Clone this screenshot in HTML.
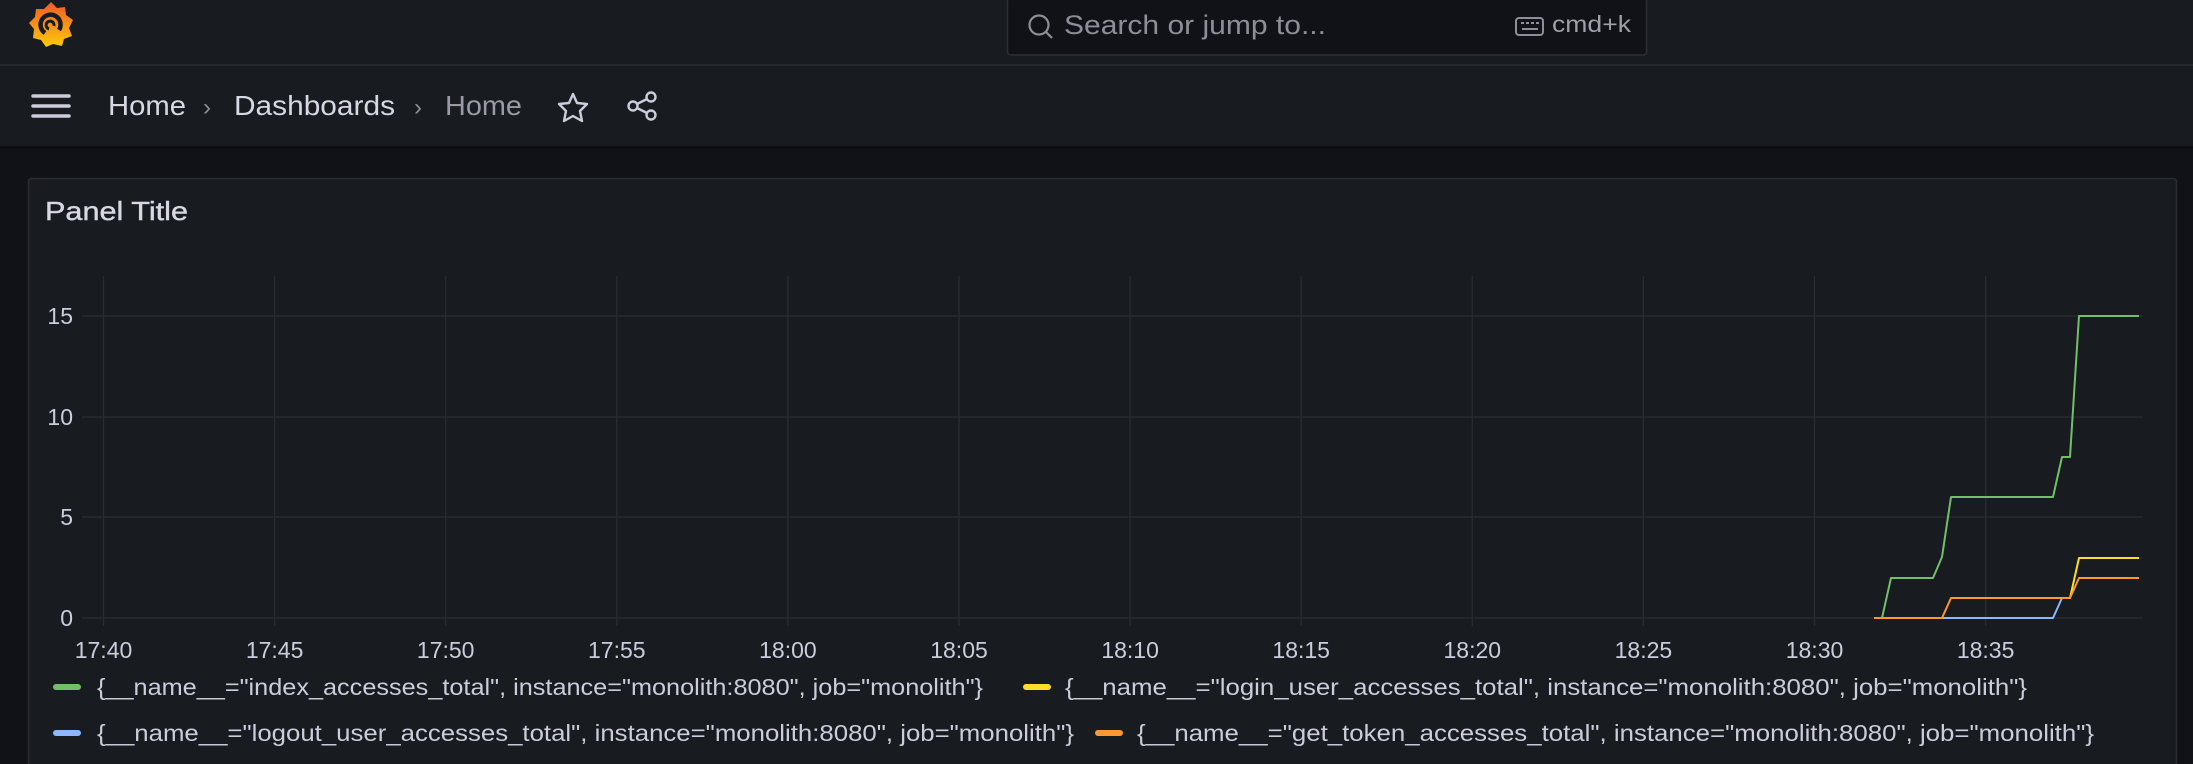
<!DOCTYPE html>
<html><head><meta charset="utf-8"><style>
html,body{margin:0;padding:0;background:#111217;width:2193px;height:764px;overflow:hidden}
svg{display:block}
text{font-family:"Liberation Sans",sans-serif}
</style></head><body>
<svg width="2193" height="764" viewBox="0 0 2193 764" xmlns="http://www.w3.org/2000/svg">
<defs>
<linearGradient id="lg" x1="0" y1="0" x2="0" y2="1"><stop offset="0" stop-color="#f05a28"/><stop offset="1" stop-color="#fbca0a"/></linearGradient>
</defs>
<rect x="0" y="0" width="2193" height="764" fill="#111217"/>
<rect x="0" y="0" width="2193" height="64" fill="#181b1f"/>
<rect x="0" y="64" width="2193" height="2" fill="#25272c"/>
<g transform="translate(51,25)">
<path d="M0,-23 L6,-17 L14,-18 L15,-10 L22,-5 L18,3 L21,11 L13,14 L11,21 L2,19 L-5,22 L-10,15 L-18,13 L-17,4 L-22,-2 L-16,-8 L-15,-16 L-7,-16 Z" fill="url(#lg)"/>
<path d="M-6,8 A10,10 0 1 1 8,5" fill="none" stroke="#181b1f" stroke-width="4.5"/>
<path d="M-2,4 a4,4 0 1 1 5,-3" fill="none" stroke="#181b1f" stroke-width="3"/>
</g>
<rect x="1007.5" y="-2" width="639" height="57" rx="3" fill="#111217" stroke="#2c2e33" stroke-width="1.5"/>
<circle cx="1039" cy="25" r="9.5" fill="none" stroke="#8e8e98" stroke-width="2.2"/>
<line x1="1046" y1="32" x2="1052" y2="38" stroke="#8e8e98" stroke-width="2.2"/>
<text x="1064" y="34" font-size="27" fill="#8e8e98" textLength="262" lengthAdjust="spacingAndGlyphs">Search or jump to...</text>
<rect x="1516" y="18" width="27" height="17" rx="3" fill="none" stroke="#8e8e98" stroke-width="2"/>
<g fill="#8e8e98"><rect x="1521" y="22" width="3" height="2"/><rect x="1526" y="22" width="3" height="2"/><rect x="1531" y="22" width="3" height="2"/><rect x="1536" y="22" width="3" height="2"/><rect x="1522" y="28" width="16" height="2"/></g>
<text x="1552" y="32" font-size="23" fill="#9fa0a8" textLength="79" lengthAdjust="spacingAndGlyphs">cmd+k</text>
<rect x="0" y="66" width="2193" height="80" fill="#181b1f"/>
<rect x="0" y="146" width="2193" height="3" fill="#0d0e11"/>
<g stroke="#ccccdc" stroke-width="3.5" stroke-linecap="round">
<line x1="33" y1="96" x2="69" y2="96"/><line x1="33" y1="106" x2="69" y2="106"/><line x1="33" y1="116" x2="69" y2="116"/>
</g>
<text x="108" y="115" font-size="28" fill="#d8d8e4" textLength="78" lengthAdjust="spacingAndGlyphs">Home</text>
<text x="203" y="115" font-size="24" fill="#8e8e98">›</text>
<text x="234" y="115" font-size="28" fill="#d8d8e4" textLength="161" lengthAdjust="spacingAndGlyphs">Dashboards</text>
<text x="414" y="115" font-size="24" fill="#8e8e98">›</text>
<text x="445" y="115" font-size="28" fill="#9a9aa4" textLength="77" lengthAdjust="spacingAndGlyphs">Home</text>
<path d="M573,94 L577,103 L587,104 L580,111 L582,121 L573,116 L564,121 L566,111 L559,104 L569,103 Z" fill="none" stroke="#ccccdc" stroke-width="2.4" stroke-linejoin="round"/>
<g fill="none" stroke="#ccccdc" stroke-width="2.4">
<circle cx="651" cy="97" r="4.5"/><circle cx="651" cy="115" r="4.5"/><circle cx="633" cy="106" r="4.5"/>
<line x1="637" y1="104" x2="647" y2="99"/><line x1="637" y1="108" x2="647" y2="113"/>
</g>
<rect x="28.5" y="178.5" width="2148" height="600" rx="3" fill="#181b1f" stroke="#2a2c31" stroke-width="1.5"/>
<text x="45" y="220" font-size="26" fill="#d8d8e4" stroke="#d8d8e4" stroke-width="0.4" textLength="143" lengthAdjust="spacingAndGlyphs">Panel Title</text>
<g stroke="#2a2c31" stroke-width="1.3">
<line x1="82" y1="316" x2="2143" y2="316"/><line x1="82" y1="417" x2="2143" y2="417"/><line x1="82" y1="517" x2="2143" y2="517"/><line x1="82" y1="618" x2="2143" y2="618"/>
<line x1="103.5" y1="276" x2="103.5" y2="626"/><line x1="274.6" y1="276" x2="274.6" y2="626"/><line x1="445.7" y1="276" x2="445.7" y2="626"/><line x1="616.8" y1="276" x2="616.8" y2="626"/><line x1="787.9" y1="276" x2="787.9" y2="626"/><line x1="959" y1="276" x2="959" y2="626"/><line x1="1130.1" y1="276" x2="1130.1" y2="626"/><line x1="1301.2" y1="276" x2="1301.2" y2="626"/><line x1="1472.3" y1="276" x2="1472.3" y2="626"/><line x1="1643.4" y1="276" x2="1643.4" y2="626"/><line x1="1814.5" y1="276" x2="1814.5" y2="626"/><line x1="1985.6" y1="276" x2="1985.6" y2="626"/>
</g>
<g font-size="23" fill="#ccccdc" text-anchor="end">
<text x="73" y="324">15</text><text x="73" y="425">10</text><text x="73" y="525">5</text><text x="73" y="626">0</text>
</g>
<g font-size="23" fill="#ccccdc" text-anchor="middle">
<text x="103.5" y="658">17:40</text><text x="274.6" y="658">17:45</text><text x="445.7" y="658">17:50</text><text x="616.8" y="658">17:55</text><text x="787.9" y="658">18:00</text><text x="959" y="658">18:05</text><text x="1130.1" y="658">18:10</text><text x="1301.2" y="658">18:15</text><text x="1472.3" y="658">18:20</text><text x="1643.4" y="658">18:25</text><text x="1814.5" y="658">18:30</text><text x="1985.6" y="658">18:35</text>
</g>
<g fill="none" stroke-width="2" stroke-linejoin="round">
<polyline stroke="#73bf69" points="1882,618 1891,578 1933,578 1942,557 1951,497 2053,497 2062,457 2070,457 2079,316 2139,316"/>
<polyline stroke="#8ab8ff" points="1942,618 2053,618 2062,598"/>
<polyline stroke="#fade2a" points="2062,598 2070,598 2079,558 2139,558"/>
<polyline stroke="#ff9830" points="1874,618 1942,618 1951,598 2070,598 2079,578 2139,578"/>
</g>
<g stroke-width="6" stroke-linecap="round">
<line x1="56" y1="687" x2="78" y2="687" stroke="#73bf69"/>
<line x1="1026" y1="687" x2="1048" y2="687" stroke="#fade2a"/>
<line x1="56" y1="733" x2="78" y2="733" stroke="#8ab8ff"/>
<line x1="1098" y1="733" x2="1120" y2="733" stroke="#ff9830"/>
</g>
<g font-size="23" fill="#ccccdc">
<text x="97" y="695" textLength="886" lengthAdjust="spacingAndGlyphs">{__name__="index_accesses_total", instance="monolith:8080", job="monolith"}</text>
<text x="1065" y="695" textLength="962" lengthAdjust="spacingAndGlyphs">{__name__="login_user_accesses_total", instance="monolith:8080", job="monolith"}</text>
<text x="97" y="741" textLength="977" lengthAdjust="spacingAndGlyphs">{__name__="logout_user_accesses_total", instance="monolith:8080", job="monolith"}</text>
<text x="1137" y="741" textLength="957" lengthAdjust="spacingAndGlyphs">{__name__="get_token_accesses_total", instance="monolith:8080", job="monolith"}</text>
</g>
</svg>
</body></html>
